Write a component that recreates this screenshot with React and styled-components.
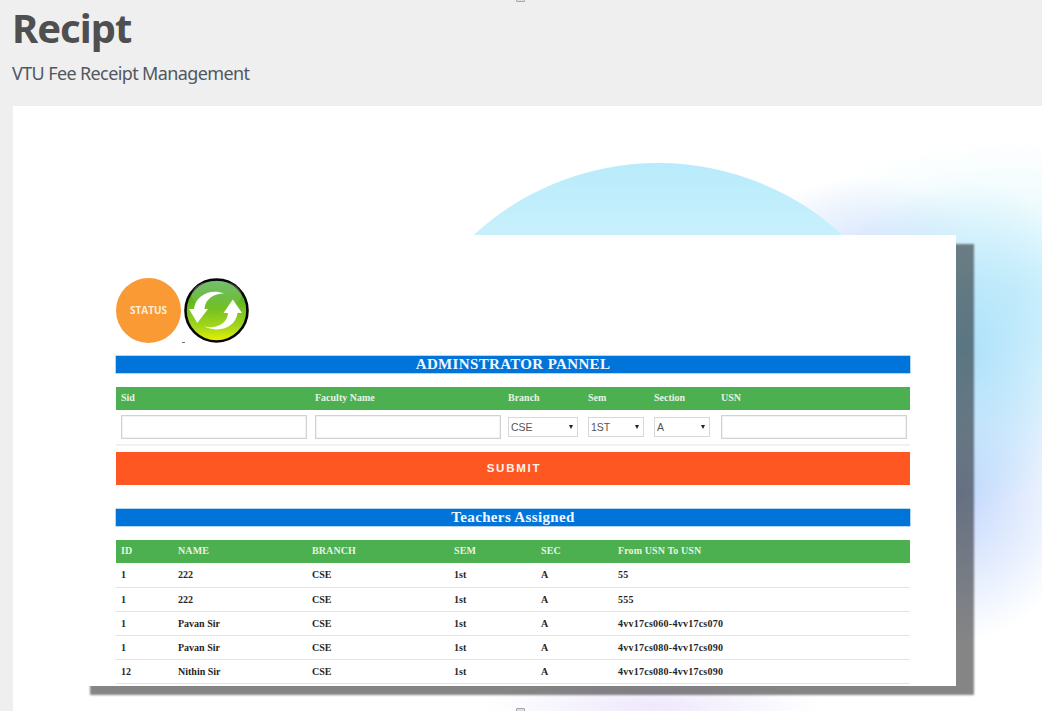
import React from "react";
import styled, { createGlobalStyle } from "styled-components";

const GlobalStyle = createGlobalStyle`
  html, body {
    margin: 0;
    padding: 0;
    height: 711px;
    overflow: hidden;
    background: #efefef;
  }
`;

const Page = styled.div`
  position: relative;
  height: 711px;
  overflow: hidden;
  background: #efefef;
  font-family: "Noto Sans", "Open Sans", sans-serif;
`;

const Title = styled.h1`
  margin: 0;
  padding: 3px 0 0 12px;
  font-size: 40px;
  line-height: 50px;
  font-weight: 700;
  letter-spacing: -1px;
  color: #4f4f4f;
`;

const Subtitle = styled.p`
  margin: 0;
  padding: 7px 0 0 12px;
  font-size: 18px;
  line-height: 26px;
  letter-spacing: -0.62px;
  color: #4f5860;
`;

const Shot = styled.div`
  position: relative;
  margin: 20px 0 0 13px;
  height: 605px;
  padding: 129px 0 0 59px;
  box-sizing: border-box;
  overflow: hidden;
  background:
    radial-gradient(ellipse 150px 165px at 950px 240px, rgba(165, 222, 250, 0.9), rgba(170, 228, 250, 0) 100%),
    radial-gradient(ellipse 125px 150px at 945px 385px, rgba(190, 212, 252, 0.95), rgba(190, 214, 252, 0) 100%),
    radial-gradient(ellipse 110px 60px at 850px 132px, rgba(214, 226, 252, 0.75), rgba(210, 222, 252, 0) 100%),
    radial-gradient(ellipse 170px 30px at 640px 600px, rgba(234, 226, 250, 0.8), rgba(232, 224, 250, 0) 100%),
    radial-gradient(ellipse 270px 150px at 1000px 185px, rgba(212, 245, 252, 0.9), rgba(225, 246, 253, 0) 100%),
    #fff;
`;

const Arc = styled.div`
  position: absolute;
  left: 373px;
  top: 57px;
  width: 544px;
  height: 544px;
  border-radius: 50%;
  background: linear-gradient(180deg, #b8ebfb 0, #c8f0fb 72px);
  clip-path: inset(0 0 460px 0);
`;

const Card = styled.div`
  position: relative;
  width: 884px;
  height: 451px;
  box-sizing: border-box;
  padding: 43px 46px 0 44px;
  background: #fff;
  box-shadow: 18px 9px 2px rgba(0, 0, 0, 0.48);
`;

const StatusRow = styled.div`
  display: flex;
  align-items: center;
  gap: 3px;
  height: 65px;
`;

const StatusBadge = styled.div`
  width: 65px;
  height: 65px;
  padding-bottom: 2px;
  box-sizing: border-box;
  border-radius: 50%;
  background: #f99a34;
  color: #fbeedd;
  display: flex;
  align-items: center;
  justify-content: center;
  font-family: "Open Sans", sans-serif;
  font-size: 10px;
  font-weight: 700;
`;

const Tick = styled.span`
  position: absolute;
  left: 110px;
  top: 107px;
  width: 3px;
  height: 1px;
  background: #77708f;
`;

const Banner = styled.div`
  margin-top: ${(p) => p.$top}px;
  height: 17px;
  background: #0074d9;
  color: #f2f7fd;
  font-family: "Liberation Serif", serif;
  font-weight: 700;
  font-size: 15px;
  line-height: 17px;
  letter-spacing: 0.35px;
  text-align: center;
  box-shadow: 0 0 0 0.5px #6aaee8;
`;

const FormGrid = styled.div`
  display: grid;
  grid-template-columns: 194px 193px 80px 66px 67px 194px;
`;

const FormHead = styled(FormGrid)`
  margin-top: 14px;
  height: 23px;
  background: #4caf50;
`;

const HeadCell = styled.div`
  padding-left: 5px;
  font-family: "Liberation Serif", serif;
  font-weight: 700;
  font-size: 10px;
  line-height: 22px;
  color: #e6f3e6;
`;

const FormRow = styled(FormGrid)`
  height: 36px;
  padding-bottom: 1px;
  align-items: center;
  border-bottom: 2px solid #f1f1f1;
  box-sizing: border-box;
`;

const FieldCell = styled.div`
  padding-left: 5px;
  height: 24px;
  display: flex;
  align-items: center;
`;

const TextBox = styled.input`
  width: 186px;
  height: 24px;
  box-sizing: border-box;
  border: 1px solid #d2d2d2;
  box-shadow: inset 0 0 0 0.5px #e6e6e6;
  background: #fff;
  padding: 0;
  outline: none;
`;

const Drop = styled.div`
  position: relative;
  width: ${(p) => p.$w}px;
  height: 20px;
  box-sizing: border-box;
  border: 1px solid #d8d8d8;
  background: #fff;
  padding-left: 2px;
  font-family: "Liberation Sans", sans-serif;
  font-size: 10.5px;
  line-height: 18px;
  color: #555;

  &::after {
    content: "";
    position: absolute;
    right: 4px;
    top: 7px;
    border-left: 2px solid transparent;
    border-right: 2px solid transparent;
    border-top: 4px solid #222;
  }
`;

const Submit = styled.button`
  display: block;
  width: 100%;
  height: 33px;
  margin-top: 6px;
  border: 0;
  padding: 0 0 2px 2px;
  background: #ff5722;
  color: #fff3ee;
  font-family: "Liberation Sans", sans-serif;
  font-weight: 700;
  font-size: 11.5px;
  letter-spacing: 1.75px;
`;

const Grid = styled.table`
  margin-top: 14px;
  width: 794px;
  table-layout: fixed;
  border-collapse: collapse;
  font-family: "Liberation Serif", serif;
  font-weight: 700;
  font-size: 10px;
`;

const HeadRow = styled.tr`
  height: 23px;
  background: #4caf50;
  color: #e6f3e6;
`;

const Th = styled.th`
  padding: 0 0 3px 5px;
  text-align: left;
  font-weight: 700;
  letter-spacing: 0.1px;
`;

const Tr = styled.tr`
  height: 24px;
  border-bottom: 1px solid #e4e4e4;
  color: #262626;
`;

const Td = styled.td`
  padding: 0 0 0 5px;

  &:last-child {
    letter-spacing: 0.25px;
  }
`;

const Handle = styled.span`
  position: absolute;
  left: 516px;
  top: ${(p) => p.$top}px;
  width: 9px;
  height: 6px;
  box-sizing: border-box;
  border: 1px solid #a8a8a8;
  background: #dedede;
  border-radius: 1px;
`;

const columns = [
  ["ID", 57],
  ["NAME", 134],
  ["BRANCH", 142],
  ["SEM", 87],
  ["SEC", 77],
  ["From USN To USN", 297],
];

const rows = [
  ["1", "222", "CSE", "1st", "A", "55"],
  ["1", "222", "CSE", "1st", "A", "555"],
  ["1", "Pavan Sir", "CSE", "1st", "A", "4vv17cs060-4vv17cs070"],
  ["1", "Pavan Sir", "CSE", "1st", "A", "4vv17cs080-4vv17cs090"],
  ["12", "Nithin Sir", "CSE", "1st", "A", "4vv17cs080-4vv17cs090"],
];

function RefreshIcon() {
  return (
    <svg width="65" height="65" viewBox="0 0 65 65">
      <defs>
        <linearGradient id="orb" x1="0" y1="0" x2="0" y2="1">
          <stop offset="0" stopColor="#2a9a24" />
          <stop offset="0.4" stopColor="#68bb22" />
          <stop offset="0.78" stopColor="#a8d81c" />
          <stop offset="1" stopColor="#eef200" />
        </linearGradient>
        <linearGradient id="gloss" x1="0" y1="0" x2="0" y2="1">
          <stop offset="0" stopColor="#fff" stopOpacity="0.35" />
          <stop offset="1" stopColor="#fff" stopOpacity="0" />
        </linearGradient>
      </defs>
      <circle cx="32.5" cy="32.5" r="31" fill="url(#orb)" stroke="#060606" strokeWidth="2.6" />
      <ellipse cx="32.5" cy="17" rx="25" ry="14" fill="url(#gloss)" />
      <path
        d="M5 31 L10 31 C11 19 25 10 40 15.5 C30 15.5 21 21 20.5 31 L24 31 L13.3 45 Z"
        fill="#fff"
      />
      <path
        d="M58 35 L53.5 35 C52 48 37 56 20 48.5 C32 51 43.5 46 44 35 L39.5 35 L48.8 21.5 Z"
        fill="#fff"
      />
    </svg>
  );
}

export default function App() {
  return (
    <Page>
      <GlobalStyle />
      <Handle $top={-4} />
      <Title>Recipt</Title>
      <Subtitle>VTU Fee Receipt Management</Subtitle>
      <Shot>
        <Arc />
        <Card>
          <StatusRow>
            <StatusBadge>STATUS</StatusBadge>
            <RefreshIcon />
          </StatusRow>
          <Tick />
          <Banner $top={13}>ADMINSTRATOR PANNEL</Banner>
          <FormHead>
            <HeadCell>Sid</HeadCell>
            <HeadCell>Faculty Name</HeadCell>
            <HeadCell>Branch</HeadCell>
            <HeadCell>Sem</HeadCell>
            <HeadCell>Section</HeadCell>
            <HeadCell>USN</HeadCell>
          </FormHead>
          <FormRow>
            <FieldCell><TextBox /></FieldCell>
            <FieldCell><TextBox /></FieldCell>
            <FieldCell><Drop $w={70}>CSE</Drop></FieldCell>
            <FieldCell><Drop $w={56}>1ST</Drop></FieldCell>
            <FieldCell><Drop $w={56}>A</Drop></FieldCell>
            <FieldCell><TextBox /></FieldCell>
          </FormRow>
          <Submit>SUBMIT</Submit>
          <Banner $top={24}>Teachers Assigned</Banner>
          <Grid>
            <colgroup>
              {columns.map(([name, w]) => (
                <col key={name} width={w} />
              ))}
            </colgroup>
            <thead>
              <HeadRow>
                {columns.map(([name]) => (
                  <Th key={name}>{name}</Th>
                ))}
              </HeadRow>
            </thead>
            <tbody>
              {rows.map((r, i) => (
                <Tr key={i}>
                  {r.map((v, j) => (
                    <Td key={j}>{v}</Td>
                  ))}
                </Tr>
              ))}
            </tbody>
          </Grid>
        </Card>
      </Shot>
      <Handle $top={708} />
    </Page>
  );
}
